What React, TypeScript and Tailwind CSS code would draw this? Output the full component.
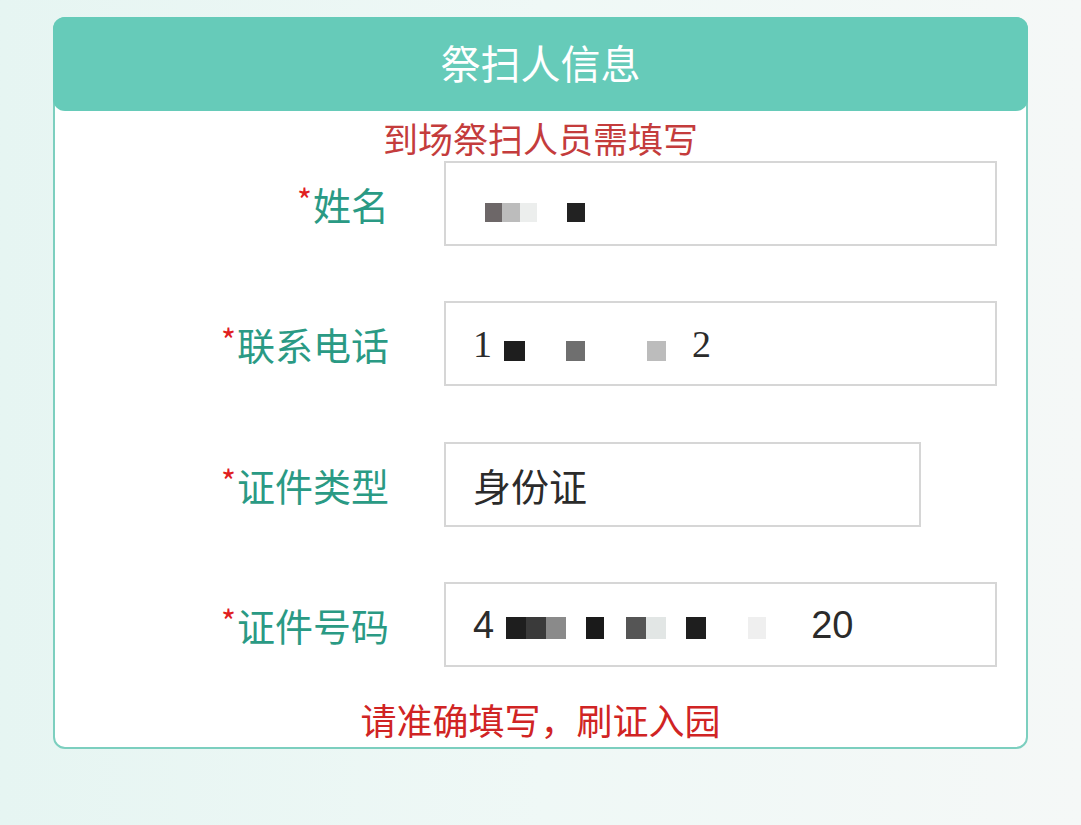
const font = "font-['Noto_Sans_CJK_SC','Noto_Sans',sans-serif]";

type Block = { w: number; c: string; ml: number };

const Mask = ({ blocks, h = 19 }: { blocks: Block[]; h?: number }) => (
  <span className="flex items-center">
    {blocks.map((b, i) => (
      <span key={i} className="block" style={{ width: b.w, height: h, background: b.c, marginLeft: b.ml }} />
    ))}
  </span>
);

const Label = ({ text }: { text: string }) => (
  <div className="w-[334px] shrink-0 flex justify-end items-start text-[38px] leading-none text-[#2a9a84]">
    <span className="text-[#e0201f] text-[32px] leading-none -mt-[2px] mr-[1px]">*</span>
    <span>{text}</span>
  </div>
);

const Row = ({ label, wide = true, children, mt }: { label: string; wide?: boolean; children: React.ReactNode; mt: string }) => (
  <div className={`flex items-center ${mt}`}>
    <Label text={label} />
    <div
      className={`ml-[55px] h-[85px] border-2 border-[#d6d6d6] bg-white flex items-center pl-[27px] text-[38px] text-[#2b2b2b] ${wide ? "w-[553px]" : "w-[477px]"}`}
    >
      {children}
    </div>
  </div>
);

export default function App() {
  return (
    <div className={`w-[1081px] h-[825px] overflow-hidden bg-gradient-to-r from-[#e6f5f2] via-[#eff8f6] to-[#f5f8f7] ${font}`}>
      <div className="pt-[17px] pl-[53px]">
        <div className="w-[975px] h-[732px] rounded-[12px] border-2 border-[#7ccfbf] bg-white">
          {/* header */}
          <div className="-mx-[2px] -mt-[2px] h-[94px] rounded-[12px] bg-[#66cbb9] flex items-center justify-center">
            <span className="text-[40px] text-white leading-none -mt-[4px]">祭扫人信息</span>
          </div>

          <div className="text-center text-[35px] leading-none text-[#c43c3c] mt-[9px]">到场祭扫人员需填写</div>

          <Row label="姓名" mt="mt-[6px]">
            <span className="mt-[18px] ml-[12px]">
              <Mask
                blocks={[
                  { w: 17, c: "#6d6768", ml: 0 },
                  { w: 18, c: "#bcbcbc", ml: 0 },
                  { w: 17, c: "#eceeed", ml: 0 },
                  { w: 18, c: "#222222", ml: 30 },
                ]}
              />
            </span>
          </Row>

          <Row label="联系电话" mt="mt-[55px]">
            <span className="font-['Liberation_Serif',serif] leading-none">1</span>
            <span className="mt-[14px] ml-[12px]">
              <Mask
                blocks={[
                  { w: 21, c: "#1e1e1e", ml: 0 },
                  { w: 19, c: "#6f6f6f", ml: 41 },
                  { w: 19, c: "#bcbcbc", ml: 62 },
                ]}
                h={20}
              />
            </span>
            <span className="ml-[26px] font-['Liberation_Serif',serif] leading-none">2</span>
          </Row>

          <Row label="证件类型" wide={false} mt="mt-[56px]">
            <span className="leading-none">身份证</span>
          </Row>

          <Row label="证件号码" mt="mt-[55px]">
            <span className="font-['Liberation_Sans',sans-serif] leading-none">4</span>
            <span className="mt-[6px] ml-[12px]">
              <Mask
                blocks={[
                  { w: 20, c: "#1e1e1e", ml: 0 },
                  { w: 20, c: "#3a3a3a", ml: 0 },
                  { w: 20, c: "#8a8a8a", ml: 0 },
                  { w: 18, c: "#1a1a1a", ml: 20 },
                  { w: 20, c: "#555555", ml: 22 },
                  { w: 20, c: "#e2e6e5", ml: 0 },
                  { w: 20, c: "#1e1e1e", ml: 20 },
                  { w: 18, c: "#efefef", ml: 42 },
                ]}
                h={22}
              />
            </span>
            <span className="ml-[45px] font-['Liberation_Sans',sans-serif] leading-none">20</span>
          </Row>

          <div className="text-center text-[36px] leading-none text-[#d02424] mt-[34px]">请准确填写，刷证入园</div>
        </div>
      </div>
    </div>
  );
}
